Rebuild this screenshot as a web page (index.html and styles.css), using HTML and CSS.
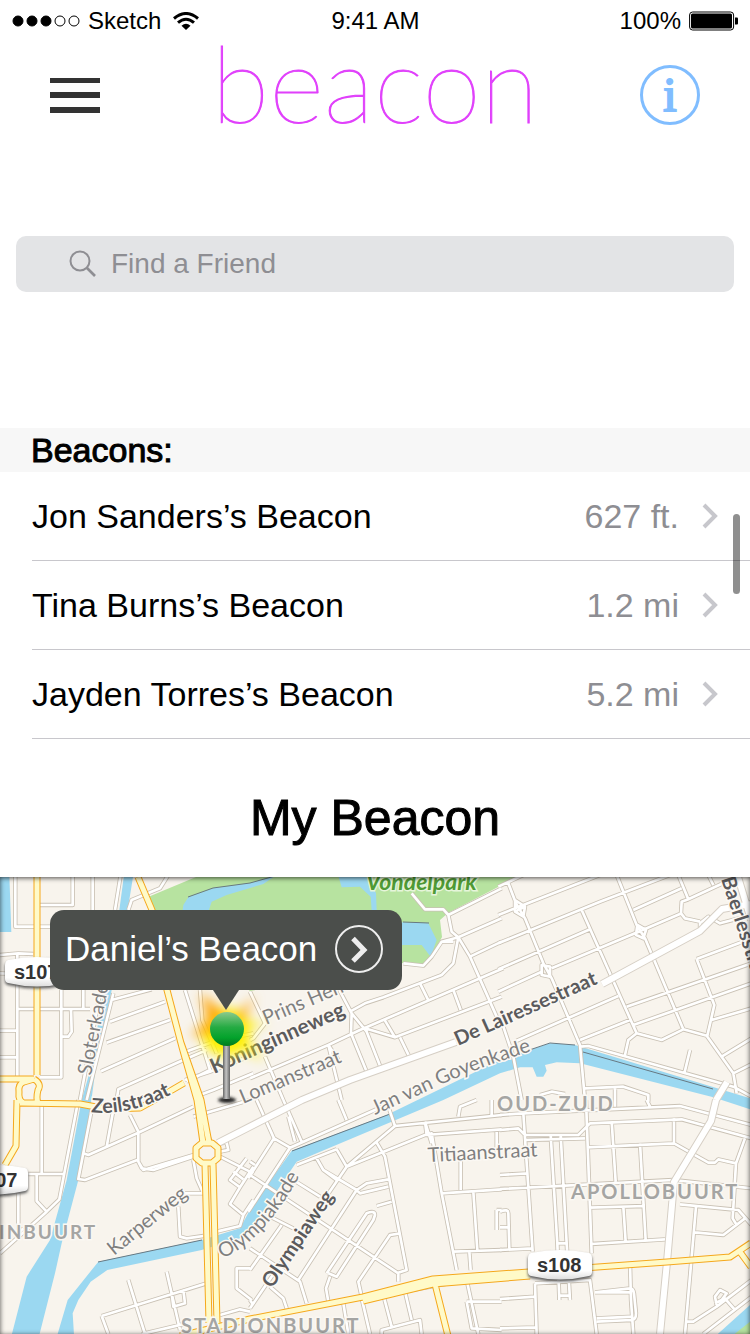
FILE: index.html
```html
<!DOCTYPE html>
<html lang="en">
<head>
<meta charset="utf-8">
<meta name="viewport" content="width=device-width, initial-scale=1">
<title>beacon</title>
<link rel="stylesheet" href="styles.css">
</head>
<body>
<div class="status">
  <div class="status-left">
    <svg class="signal" viewBox="0 0 68 12" width="68" height="12" aria-hidden="true">
      <g stroke="#000"><circle cx="6" cy="6" r="5"/><circle cx="20" cy="6" r="5"/><circle cx="34" cy="6" r="5"/><circle cx="48" cy="6" r="5" fill="none"/><circle cx="62" cy="6" r="5" fill="none"/></g>
    </svg>
    <span>Sketch</span>
    <svg class="wifi" viewBox="0 0 26 18" width="26" height="18" aria-hidden="true">
      <g fill="none" stroke="#000" stroke-width="3"><path d="M1 6.500Q13 -3.500 25 6.500"/><path d="M5 10.700Q13 3.700 21 10.700"/></g>
      <path d="M8.500 13.700Q13 9.800 17.500 13.700L13 18Z"/>
    </svg>
  </div>
  <div>9:41 AM</div>
  <div class="status-right">
    <span>100%</span>
    <svg viewBox="0 0 50 20" width="50" height="20" aria-hidden="true">
      <rect x=".6" y="1" width="44" height="18" rx="3" fill="none" stroke="#000"/>
      <rect x="2" y="2.500" width="41" height="15" rx="1.500"/><path d="M46 6.500h2q1 0 1 1v5q0 1-1 1h-2z"/>
    </svg>
  </div>
</div>

<header class="topbar">
  <button class="icon-btn menu" type="button" aria-label="Menu">
    <svg viewBox="0 0 50 38" width="50" height="38"><path fill="#333" d="M0 2h50v5H0zM0 16h50v6H0zM0 31h50v6H0z"/></svg>
  </button>
  <h1 class="logo">beacon</h1>
  <button class="icon-btn info" type="button" aria-label="Information">i</button>
</header>

<label class="search">
  <svg viewBox="0 0 28 28" width="28" height="28" aria-hidden="true"><g fill="none" stroke="#8e8e93" stroke-width="2"><circle cx="11" cy="11" r="9.500"/><path stroke-width="2.600" d="M18 18l8 8"/></g></svg>
  <input type="search" placeholder="Find a Friend" aria-label="Find a Friend">
</label>

<section class="beacons">
  <h2 class="section-title">Beacons:</h2>
  <ul class="list">
    <li><a class="row" href="#jon"><span>Jon Sanders’s Beacon</span><span class="distance">627 ft.</span><svg class="chevron" viewBox="0 0 16 26" width="16" height="26"><path d="M2 2l11 11L2 24"/></svg></a></li>
    <li><a class="row" href="#tina"><span>Tina Burns’s Beacon</span><span class="distance">1.2 mi</span><svg class="chevron" viewBox="0 0 16 26" width="16" height="26"><path d="M2 2l11 11L2 24"/></svg></a></li>
    <li><a class="row" href="#jayden"><span>Jayden Torres’s Beacon</span><span class="distance">5.2 mi</span><svg class="chevron" viewBox="0 0 16 26" width="16" height="26"><path d="M2 2l11 11L2 24"/></svg></a></li>
  </ul>
  <div class="scroll-thumb"></div>
</section>

<h2 class="mine">My Beacon</h2>

<section class="map">
  <svg class="map-art" viewBox="0 877 750 457" preserveAspectRatio="xMinYMin slice" role="img" aria-label="Map of Oud-Zuid">
    <defs>
      <filter id="glow" x="-50%" y="-50%" width="200%" height="200%"><feGaussianBlur stdDeviation="6"/></filter>
      <filter id="soft" x="-50%" y="-50%" width="200%" height="200%"><feGaussianBlur stdDeviation="1.500"/></filter>
      <linearGradient id="ball" x1="0" y1="0" x2="0" y2="1"><stop offset="0" stop-color="#8cc98c"/><stop offset=".45" stop-color="#25ab43"/><stop offset=".75" stop-color="#04a32c"/><stop offset="1" stop-color="#027a1e"/></linearGradient>
      <linearGradient id="stem"><stop offset="0" stop-color="#666"/><stop offset=".45" stop-color="#c4c4c4"/><stop offset="1" stop-color="#666"/></linearGradient>
      <linearGradient id="plate" x1="0" y1="0" x2="0" y2="1"><stop offset="0" stop-color="#fff"/><stop offset=".7" stop-color="#fff"/><stop offset="1" stop-color="#ddd"/></linearGradient>
      <path id="shield" d="M3 3Q32 -3 61 3Q64 4 64 8V22Q64 25 61 26Q32 33 3 26Q0 25 0 22V8Q0 4 3 3Z"/>
      <g id="streets">
        <g transform="translate(0 860) scale(.33333)">
          <path d="M46 45V200H150M218 45V135H120M278 45V150M44 200L105 200M0 285L55 280L100 282M52 282V650M0 340L52 342M0 512H52M0 592H52M52 447H270M184 390V652H120M184 530H205L215 515L213 447M250 390V447M362 45L345 150M340 400L260 720M300 400L240 720M385 150L395 120L480 85L505 45M335 420L455 388M330 485L495 425M320 548L510 480M303 634L525 535M350 720L355 688L535 607L620 570M555 390L630 630L560 665M600 390L607 480L650 580M545 580L640 545L760 520M555 660L630 635L760 585M585 710L640 690L760 640"/>
        </g>
        <g transform="translate(250 860) scale(.33333)">
          <path d="M485 100L525 148H580L595 165L605 215L625 232L660 290L740 470L760 500M595 165L755 85M625 232L755 175M625 232L575 245L545 290L520 317L460 310M625 232L610 310L575 345L510 370L400 412L345 430L300 455M610 245H575M660 290L755 245M510 370L537 425M610 390L632 450M0 655L235 555L330 510L760 325M405 482L435 532L755 410M345 505L435 532M450 532L478 590M268 390L305 460L303 520L352 640M305 460L350 515L395 630M235 555L275 720M45 590L100 720M265 600L235 555M0 395L45 490L10 535L0 540"/>
        </g>
        <g transform="translate(500 860) scale(.33333)">
          <path d="M-5 80L70 45M25 70L48 130L75 175L130 310L155 355L240 555L255 720M-5 165L45 145L300 45M-5 250L300 125L510 45M45 120L75 140L70 170L45 155ZM75 140L45 155M-5 328L270 208M-5 395L125 335M155 325L405 220L545 160M245 150L410 520L485 540L550 508L620 527L700 640L760 610M350 45L410 195L435 235L550 508M400 150L545 85M535 45L565 118L690 60M625 45L640 75M565 118L545 125L543 160L555 175L600 185M412 195L438 210L430 235L408 225ZM125 315L150 320L150 350L125 345ZM380 440L755 310M400 495L755 370M50 542L355 408M240 540L390 480M410 520L385 540L375 585M590 297L755 235M590 297L643 435L622 527M635 480L755 445M665 590L755 535M240 560L265 558L700 680L755 710M570 570L553 640M600 205V190L625 170L660 190L755 165M10 500L40 590L65 720M255 685L370 680L445 705V725M345 685V720M120 705L155 695L195 702M700 640L710 700"/>
        </g>
        <g transform="translate(0 1100) scale(.33333)">
          <path d="M125 0V222H190M85 222H125M235 0L178 298L140 335L0 460M110 222V303L140 335M55 280V400L70 385M275 30L235 237L255 240L412 180M390 45L415 95V185L430 210L580 165M340 30L320 140M250 160L265 165L415 98L580 20M580 50L750 0M415 185L425 205L460 210L580 170M555 280H610M535 320L540 410L560 415L610 408M610 280L590 235L580 180M590 20L630 120M660 170L760 220M740 175L690 240L720 262L760 200M720 262L690 312L730 345L760 300M650 395L720 378L730 345M700 215L730 238M385 540L435 702M500 515L540 690M305 648L620 550M305 648L325 702M425 702L560 670M550 570L555 610L520 620L515 580M750 505L710 505V565L755 600M660 645L720 628L750 635M660 130L680 128L685 150L660 155"/>
        </g>
        <g transform="translate(250 1100) scale(.33333)">
          <path d="M20 0L72 115L120 143L-5 335M100 0L155 125M72 115L-5 235M120 143L420 10M0 185L15 195M115 50L135 125M265 0L290 60M415 20L435 78L290 200L0 625M435 78L755 45M290 200L525 105L755 88M525 65L530 105L545 100L575 280L620 510M625 50L630 20L680 0M725 0V50M740 90V170M575 280L755 268M380 128L405 170L470 510L440 520M525 65L545 130M260 148L290 200M140 195L260 148M200 175L220 210L320 270L145 540M320 270L350 250L415 238M320 270L330 280L415 260M380 318L425 305M450 400L420 405L325 545L335 590M260 240L220 210M130 240L210 290M0 225L445 520V545M230 520L350 340Q375 330 375 345L370 360L260 530L235 520M240 530L228 565L235 605M60 350L130 385M95 375L0 510M0 445L150 545L170 610M60 560L100 595L110 625M0 600L10 615M610 455L755 450M632 180V270M670 275L682 450M658 455L662 510M740 330V390M740 330H755M650 605H755M650 605L665 685L755 690M650 540L685 702M460 575L650 540M400 585L425 680M465 575L485 660M395 702V690L510 660L515 702M280 610L295 702M335 595L360 702"/>
        </g>
        <g transform="translate(500 1100) scale(.33333)">
          <path d="M0 90L55 85L75 105H235L270 70L545 58L755 115M0 45L70 40L540 18L755 75M70 40L98 455M258 0L275 460M345 0V20M440 0L450 20M75 120L255 115M152 105L172 430L178 600M182 105L200 430L210 600M170 430H200M335 65L347 245M260 142L522 130L625 188H645L655 178L708 190M522 55V130M420 130L437 420M0 225L85 220M0 267L520 240L755 265M735 115L708 190L698 355L710 375M268 323L435 318M370 320L377 425M275 432L495 418M0 335Q25 325 25 340L28 445M0 382H25M0 450L98 445M540 313L715 330L755 375M588 320L555 702M585 397L670 405L735 355M105 550L270 540L290 702M105 550L110 702M0 597L105 590M0 685L110 682M180 587H210M390 490L393 600L400 702M285 577L390 565Q400 565 402 580L408 640Q408 660 395 660L290 665M285 577H390M290 655L400 650M560 665L580 665L650 620L755 540M650 615L645 590L660 570L680 580L665 600L645 610M670 590L705 630M610 702L755 590"/>
        </g>
      </g>
      <g id="avenues">
        <path d="M218 1143L302 1100L350 1080L456 1042M602 984L700 931L722 909L751 904"/>
        <path d="M716 1100L711 1121L674 1182L667 1262L660 1334M727 1082L716 1100M738 877L751 920"/>
      </g>
      <g id="mains">
        <path d="M37 877V1075M138 877L152 910L167 990L182 1047L197 1100L203 1143M180 1040L201 1100L209 1143"/>
        <path d="M0 1079H34M34 1079Q42 1084 38 1090Q36 1098 38 1103H24Q18 1101 19 1092Q18 1084 24 1082L34 1079M17 1100L16 1146L5 1165M20 1103L80 1104L107 1109L140 1108L172 1090L184 1083"/>
        <path d="M202 1143H212L218 1148V1158L212 1163H202L196 1158V1148ZM205 1164L209 1323M213 1164L217 1323"/>
        <path d="M180 1336L250 1319L363 1297L433 1279L500 1274L667 1262L730 1257L751 1243M740 1252L751 1267M434 1280L448 1336M363 1301L433 1284L530 1276"/>
      </g>
    </defs>

    <rect y="877" width="750" height="457" fill="#f8f4ed"/>
    <path fill="#b7e3a0" d="M148 897L196 877H520L500 886L448 913L440 920L442 937L431 957L423 966L403 963L250 991L153 910ZM733 1334L750 1320V1334Z"/>
    <g class="water" transform="translate(0 860) scale(.33333)">
      <path d="M0 45H28L34 216H0ZM372 45H400L383 150L335 390L285 640L265 790L235 960L185 1150L165 1240L118 1425H35L80 1250L150 1140L200 960L245 720L268 640L312 390L358 150Z"/>
      <path d="M565 112L640 85L750 70L825 48L790 72L680 105L635 125L620 170H545L550 135ZM1015 48H1100L1112 62L1128 100L1130 150H1115L1112 110L1080 80L1025 82ZM1205 187L1285 190L1310 240L1292 290L1265 255H1205Z"/>
      <path d="M172 1425L203 1320L295 1205L605 1140L720 1105L755 1040L875 872L1160 765L1500 600L1650 550L1725 555L2250 715V748L2140 712L1740 610L1670 607L1635 615L1640 632L1630 650H1610L1598 622H1560L1500 640L1330 720L950 880L890 905L755 1105L720 1135L605 1170L322 1230L272 1265L235 1320L218 1360L222 1425ZM2150 1425L2250 1335V1385L2200 1425Z"/>
    </g>
    <g fill="none" stroke="#677983" stroke-width="1"><path d="M188 897L213 888L250 883L275 876M98 1262L202 1240M292 1151L390 1114M500 1060L550 1043L575 1045M583 1052L713 1089M403 922L429 923"/></g>

    <g fill="none" stroke-linejoin="round">
      <use href="#streets" stroke="#c9c1b4" stroke-width="13"/>
      <use href="#streets" stroke="#fff" stroke-width="8"/>
      <use href="#avenues" stroke="#d6cfc5" stroke-width="8"/>
      <use href="#avenues" stroke="#fff" stroke-width="6"/>
      <use href="#mains" stroke="#f5a81c" stroke-width="7"/>
      <use href="#mains" stroke="#fffac8" stroke-width="5"/>
    </g>

    <path id="zeil" fill="none" d="M91 1112Q130 1117 178 1091"/>
    <path id="kade" fill="none" d="M222 1258Q262 1244 302 1172"/>
    <path id="goyen" fill="none" d="M375 1115Q410 1099 445 1083T535 1050"/>
    <g class="labels">
      <text class="green" x="366" y="890">Vondelpark</text>
      <text class="strong" transform="translate(721 879) rotate(72)">Baerlesstraat</text>
      <text transform="translate(91 1076) rotate(-79)">Sloterkade</text>
      <text transform="translate(266 1025) rotate(-23)">Prins Hendrik</text>
      <text class="strong wide" transform="translate(214 1074) rotate(-24)">Koninginneweg</text>
      <text transform="translate(243 1104) rotate(-23)">Lomanstraat</text>
      <text class="strong" transform="translate(458 1046) rotate(-24)">De Lairessestraat</text>
      <text><textPath href="#goyen">Jan van Goyenkade</textPath></text>
      <text class="strong"><textPath href="#zeil">Zeilstraat</textPath></text>
      <text transform="translate(428 1162) rotate(-3)">Titiaanstraat</text>
      <text transform="translate(114 1256) rotate(-39)">Karperweg</text>
      <text><textPath href="#kade">Olympiakade</textPath></text>
      <text class="strong" transform="translate(272 1289) rotate(-56)">Olympiaweg</text>
      <text class="area" x="497" y="1111">OUD-ZUID</text>
      <text class="area" x="571" y="1199">APOLLOBUURT</text>
      <text class="area small" x="-1" y="1239">INBUURT</text>
      <text class="area" x="181" y="1333">STADIONBUURT</text>
    </g>

    <g class="shields">
      <use href="#shield" x="5" y="959" fill="#555" filter="url(#soft)"/><use href="#shield" x="5" y="957"/><text x="14" y="979">s107</text>
      <use href="#shield" x="-36" y="1167" fill="#555" filter="url(#soft)"/><use href="#shield" x="-36" y="1165"/><text x="-27" y="1187">s107</text>
      <use href="#shield" x="528" y="1252" fill="#555" filter="url(#soft)"/><use href="#shield" x="528" y="1250"/><text x="537" y="1272">s108</text>
    </g>

    <g filter="url(#glow)"><circle cx="226" cy="1032" r="24" fill="#fff200"/><path fill="#ffa400" d="M200 992L232 1020L255 996L238 1032L190 1036L208 1020Z"/><path fill="#fff000" d="M196 1060L216 1030L264 1062L240 1030L268 1024L220 1018Z"/></g>
    <ellipse cx="227" cy="1100" rx="9" ry="3" fill="#222" filter="url(#soft)"/>
    <rect x="223" y="1044" width="7" height="55" fill="url(#stem)"/>
    <circle cx="227" cy="1029" r="17" fill="url(#ball)"/>
  </svg>
  <a class="callout" href="#daniel">
    <span>Daniel’s Beacon</span>
    <svg viewBox="0 0 48 48" width="48" height="48" aria-hidden="true"><circle cx="24" cy="24" r="23" fill="none" stroke="#eee" stroke-width="2"/><path d="M18 13.500L29 25L18 36" fill="none" stroke="#eee" stroke-width="5"/></svg>
  </a>
</section>
</body>
</html>
```
FILE: styles.css
```css
* { box-sizing: border-box; }

body {
  margin: 0;
  min-height: 100vh;
  display: flex;
  flex-direction: column;
  background: #fff;
  color: #000;
  font-family: "Liberation Sans", Arial, sans-serif;
}

h1, h2, ul { margin: 0; padding: 0; font-weight: 400; }
svg { display: block; flex: none; }

.status {
  display: grid;
  grid-template-columns: 1fr auto 1fr;
  align-items: center;
  height: 41px;
  padding: 0 11px 0 12px;
  font-size: 24px;
}
.status-left, .status-right { display: flex; align-items: center; gap: 8px; }
.status-left .wifi { margin-left: 4px; }
.status-right { justify-content: flex-end; }

.topbar {
  display: flex;
  align-items: center;
  justify-content: space-between;
  height: 107px;
  padding: 0 50px;
}
.icon-btn {
  width: 60px;
  height: 60px;
  padding: 0;
  border: 0;
  background: none;
  cursor: pointer;
}
.logo {
  margin-bottom: 26px;
  color: #e040fb;
  font: 100 106px/80px Lato, sans-serif;
  -webkit-text-stroke: 1px #e040fb;
}
.info {
  border: 3px solid #80bdff;
  border-radius: 50%;
  color: #80bdff;
  font: 48px/54px "Liberation Serif", serif;
  -webkit-text-stroke: 2px #80bdff;
}

.search {
  display: flex;
  align-items: center;
  gap: 14px;
  height: 56px;
  margin: 88px 16px 136px;
  padding: 0 53px;
  border-radius: 10px;
  background: #e3e4e6;
}
.search input {
  flex: 1;
  min-width: 0;
  padding: 0;
  border: 0;
  outline: 0;
  background: none;
  font: 28px/36px "Liberation Sans", Arial, sans-serif;
}
.search input::placeholder { color: #8e8e93; opacity: 1; }

.beacons { position: relative; }
.section-title {
  padding: 0 31px;
  background: #f7f7f7;
  font-size: 34px;
  line-height: 44px;
  -webkit-text-stroke: 1px #000;
}
.list { list-style: none; }
.row {
  display: flex;
  align-items: center;
  height: 89px;
  margin-left: 32px;
  padding-right: 32px;
  border-bottom: 1px solid #c8c7cc;
  color: #000;
  font-size: 34px;
  text-decoration: none;
}
.distance { margin-left: auto; color: #8e8e93; }
.chevron { margin-left: 23px; fill: none; stroke: #c7c7cc; stroke-width: 4; }
.scroll-thumb {
  position: absolute;
  top: 86px;
  right: 10px;
  width: 7px;
  height: 80px;
  border-radius: 4px;
  background: rgba(0, 0, 0, .44);
}

.mine {
  padding-top: 50px;
  height: 138px;
  font-size: 50px;
  line-height: 58px;
  text-align: center;
  -webkit-text-stroke: 1px #000;
}

.map {
  position: relative;
  flex: 1;
  min-height: 457px;
  overflow: hidden;
}
.map::after {
  content: "";
  position: absolute;
  inset: 0;
  box-shadow: inset 0 1px 5px rgba(0, 0, 0, .7);
  pointer-events: none;
}
.map-art {
  position: absolute;
  inset: 0;
  width: 100%;
  height: 100%;
}
.water { fill: #9bd8f1; }
.labels text {
  font: 20px Lato, sans-serif;
  fill: #7f7f7f;
  stroke: #fbf8f3;
  stroke-width: 3px;
  paint-order: stroke;
}
.labels .strong { font-weight: 700; fill: #5b5b5d; }
.labels .wide { font-size: 21px; }
.labels .green { font-size: 23px; font-weight: 700; font-style: italic; fill: #4f9a35; stroke: #e6f5da; }
.labels .area { font-weight: 700; fill: #a5a5a3; letter-spacing: 2px; }
.labels .small { font-size: 19px; }
.shields { fill: url(#plate); }
.shields text { font: bold 20px "Liberation Sans", Arial, sans-serif; fill: #333; }

.callout {
  position: absolute;
  z-index: 1;
  top: 33px;
  left: 50px;
  display: flex;
  align-items: center;
  gap: 18px;
  height: 80px;
  padding: 0 19px 2px 15px;
  border-radius: 14px;
  background: #4b4e4b;
  color: #fff;
  font-size: 35px;
  text-decoration: none;
}
.callout::after {
  content: "";
  position: absolute;
  top: 100%;
  left: 163px;
  border: 13px solid transparent;
  border-top: 20px solid #4b4e4b;
  border-bottom: 0;
}
```
